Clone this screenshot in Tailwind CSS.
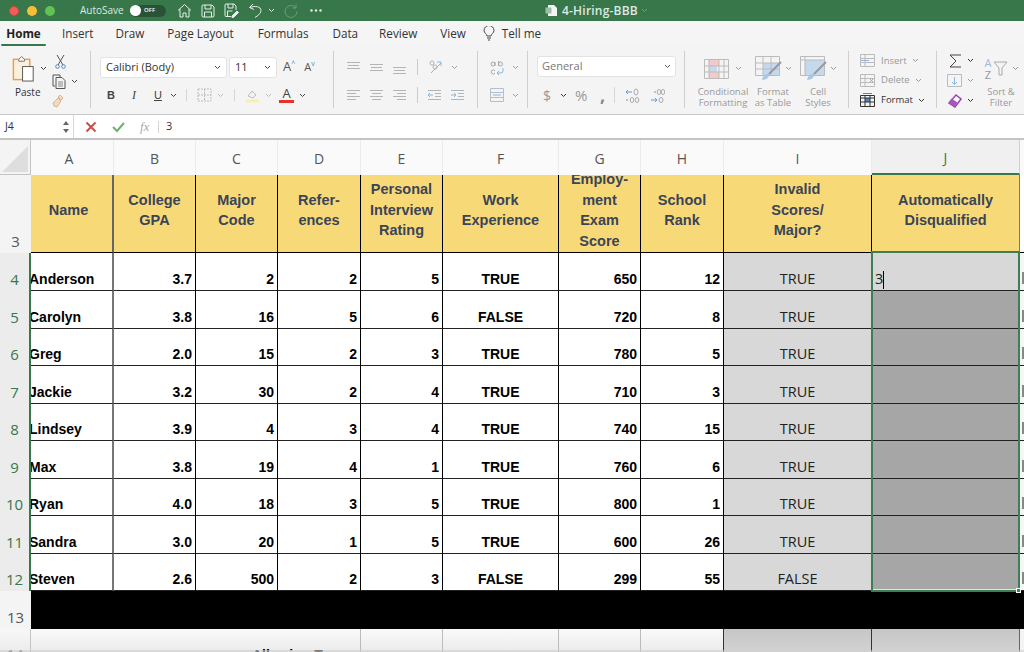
<!DOCTYPE html><html lang="en">
<head>
  <meta charset="UTF-8">
  <title>4-Hiring-BBB</title>
  <script src="https://cdn.jsdelivr.net/npm/@tailwindcss/browser@4"></script>
</head>
<body class="w-[1024px] h-[652px] overflow-hidden bg-white font-['Open_Sans',sans-serif] text-[#333] relative">

  <!-- title bar -->
  <div class="h-[21px] bg-[#38774a] flex items-center relative">
    <div class="flex gap-[8px] ml-[9px] w-[71px]">
      <span class="w-[10px] h-[10px] rounded-full bg-[#ee5f57] border border-[#d0483f]"></span>
      <span class="w-[10px] h-[10px] rounded-full bg-[#f6bd3b]"></span>
      <span class="w-[10px] h-[10px] rounded-full bg-[#5fc454]"></span>
    </div>
    <span class="text-[10px] text-[#dfe9e2] w-[50px]">AutoSave</span>
    <div class="w-[36px] h-[12px] rounded-full bg-[#2a5237] flex items-center">
      <span class="w-[11px] h-[11px] rounded-full bg-white"></span>
      <span class="text-[6px] text-white ml-[3px] font-semibold">OFF</span>
    </div>
    <div class="flex items-center ml-[11px] gap-[9px]">
      <svg width="15" height="15" viewBox="0 0 15 15" fill="none" stroke="#e6efe9"><path d="M1 7.500 7.500 1.500 14 7.500M3 6v8h3v-4h3v4h3V6"/></svg>
      <svg width="14" height="14" viewBox="0 0 14 14" fill="none" stroke="#e6efe9"><path d="M1 2a1 1 0 0 1 1-1h9l2 2v9a1 1 0 0 1-1 1H2a1 1 0 0 1-1-1zM4 1v4h6V1M3.500 13V8h7v5"/></svg>
      <svg width="15" height="15" viewBox="0 0 15 15" fill="none" stroke="#e6efe9"><path d="M7 13.500H2a1 1 0 0 1-1-1V2a1 1 0 0 1 1-1h8l2 2v4M4 1v4h5V1M3.500 13V8h5"/><path d="m8 13 5-5 1.500 1.500-5 5H8z" fill="#e6efe9"/></svg>
      <svg width="15" height="15" viewBox="0 0 15 15" fill="none" stroke="#e6efe9"><path d="M5 1 1.500 4.500 6 6.500M2 4.500c5-2 11-1 11 3 0 3-3 5-6 7"/></svg>
      <svg class="ml-[-4px]" width="7" height="5" viewBox="0 0 7 5" fill="none" stroke="#e6efe9"><path d="m1 1 2.500 2.500L6 1"/></svg>
      <svg width="14" height="14" viewBox="0 0 14 14" fill="none" stroke="#6d9d7c"><path d="M11.500 3.500a6 6 0 1 0 1.500 4M12 .5v3.500H8.500"/></svg>
      <svg class="ml-[3px]" width="12" height="3" viewBox="0 0 12 3" fill="#e6efe9"><circle cx="1.500" cy="1.500" r="1.200"/><circle cx="6" cy="1.500" r="1.200"/><circle cx="10.500" cy="1.500" r="1.200"/></svg>
    </div>
    <div class="absolute left-[545px] top-0 h-[21px] flex items-center">
      <svg width="13" height="13" viewBox="0 0 13 13"><path d="M3 1h6l3 3v8H3z" fill="#f4f6f4"/><rect x="0.500" y="3.500" width="6" height="6" fill="#9dbfa8"/></svg>
      <span class="ml-[4px] text-[12px] tracking-[0.2px] font-semibold text-[#dfe9e2]">4-Hiring-BBB</span>
      <svg class="ml-[3px]" width="7" height="5" viewBox="0 0 7 5" fill="none" stroke="#6d9d7c"><path d="m1 1 2.500 2.500L6 1"/></svg>
    </div>
  </div>

  <!-- tabs -->
  <div class="h-[25px] bg-[#f5f5f5] flex items-center text-[11.700px] text-[#333] relative">
    <div class="ml-[1px] w-[45px] h-[25px] flex justify-center items-center relative font-bold text-[#222]">Home
      <span class="absolute left-0 right-0 bottom-0 h-[2px] bg-[#38774a] rounded-sm"></span>
    </div>
    <span class="ml-[16px]">Insert</span>
    <span class="ml-[22px]">Draw</span>
    <span class="ml-[23px]">Page Layout</span>
    <span class="ml-[24px]">Formulas</span>
    <span class="ml-[24px]">Data</span>
    <span class="ml-[21px]">Review</span>
    <span class="ml-[23px]">View</span>
    <svg class="ml-[17px]" width="12" height="15" viewBox="0 0 12 15" fill="none" stroke="#444"><path d="M4 10c0-2-3-3-3-5.500a5 5 0 0 1 10 0C11 7 8 8 8 10zM4 12h4M5 14h2"/></svg>
    <span class="ml-[7px]">Tell me</span>
  </div>

  <!-- ribbon -->
  <div class="h-[69px] bg-[#f4f4f4] border-b border-[#c9c9c9] flex items-start text-[#555] relative">
    <!-- clipboard -->
    <div class="w-[91px] h-[57px] mt-[5px] border-r border-[#cfcfcf] flex">
      <div class="w-[52px] flex flex-col">
        <div class="flex items-center ml-[11px] mt-[4px]">
          <svg width="27" height="27" viewBox="0 0 28 28" fill="none"><rect x="2.500" y="4.500" width="17" height="21" fill="#fbf0de" stroke="#ee9c45" stroke-width="1.500"/><path d="M8 4.500 11 1.500l3 3v2H8z" fill="#f5f5f5" stroke="#777"/><rect x="12" y="12" width="11" height="15" fill="#fff" stroke="#555"/></svg>
          <svg class="ml-[2px]" width="7" height="5" viewBox="0 0 7 5" fill="none" stroke="#444"><path d="m1 1 2.500 2.500L6 1"/></svg>
        </div>
        <span class="text-[10px] leading-[10px] text-[#333] mt-[5px] ml-[15px]">Paste</span>
      </div>
      <div class="flex flex-col items-start mt-[3px]">
        <svg class="ml-[3px]" width="11" height="15" viewBox="0 0 11 15" fill="none" stroke="#555"><path d="M2 1 8 11M9 1 3 11"/><circle cx="2.500" cy="12.500" r="1.800" stroke="#4a8ac9"/><circle cx="8.500" cy="12.500" r="1.800" stroke="#4a8ac9"/></svg>
        <svg class="mt-[5px]" width="26" height="15" viewBox="0 0 26 15" fill="none" stroke="#555"><path d="M3 12H1V1h7v2"/><path d="M4 3.500h6l3 3v8H4z"/><path d="M6 8h5M6 10h5M6 12h5" stroke="#888"/><path d="m20 6 2.500 2.500L25 6" stroke="#444"/></svg>
        <svg class="mt-[5px]" width="15" height="14" viewBox="0 0 15 14" fill="#f3d9bd" stroke="#d8b595"><path d="m8 1 3 3-2 2-3-3zM1 9l5-5 3 3-4 6-3-1z"/></svg>
      </div>
    </div>
    <!-- font -->
    <div class="w-[243px] h-[57px] mt-[5px] border-r border-[#cfcfcf] pl-[9px]">
      <div class="flex items-center h-[22px] mt-[5px]">
        <div class="w-[127px] h-[21px] bg-white rounded-[3px] border border-[#e3e3e3] flex items-center justify-between px-[5px] text-[11px] text-[#333]">Calibri (Body)<svg width="7" height="5" viewBox="0 0 7 5" fill="none" stroke="#444"><path d="m1 1 2.500 2.500L6 1"/></svg></div>
        <div class="w-[48px] h-[21px] ml-[2px] bg-white rounded-[3px] border border-[#e3e3e3] flex items-center justify-between px-[5px] text-[11px] text-[#333]">11<svg width="7" height="5" viewBox="0 0 7 5" fill="none" stroke="#444"><path d="m1 1 2.500 2.500L6 1"/></svg></div>
        <span class="ml-[6px] text-[13px] text-[#555]">A</span><span class="text-[7px] text-[#4a8ac9] mb-[6px]">^</span>
        <span class="ml-[9px] text-[11px] text-[#555]">A</span><span class="text-[7px] text-[#4a8ac9] mb-[6px]">v</span>
      </div>
      <div class="flex items-center h-[22px] mt-[6px] text-[#444]">
        <span class="ml-[6px] w-[26px] text-[11px] font-bold font-['Liberation_Sans',sans-serif] text-center pr-[16px]">B</span>
        <span class="w-[22px] text-[12px] italic font-['Liberation_Serif',serif]">I</span>
        <span class="w-[16px] text-[11px] underline font-['Liberation_Sans',sans-serif]">U</span>
        <svg width="7" height="5" viewBox="0 0 7 5" fill="none" stroke="#444"><path d="m1 1 2.500 2.500L6 1"/></svg>
        <span class="ml-[9px] w-px h-[12px] bg-[#d5d5d5]"></span>
        <svg class="ml-[10px]" width="15" height="14" viewBox="0 0 15 14" fill="none" stroke="#bbb" stroke-dasharray="2 1"><path d="M1 1h13v12H1zM7.500 1v12M1 7h13"/></svg>
        <svg class="ml-[5px]" width="7" height="5" viewBox="0 0 7 5" fill="none" stroke="#bbb"><path d="m1 1 2.500 2.500L6 1"/></svg>
        <span class="ml-[10px] w-px h-[12px] bg-[#d5d5d5]"></span>
        <svg class="ml-[10px]" width="15" height="15" viewBox="0 0 15 15"><path d="m3 8 4-5 4 4-3 3z" fill="none" stroke="#bbb"/><rect x="1" y="11.500" width="13" height="3" fill="#f7efb0"/></svg>
        <svg class="ml-[5px]" width="7" height="5" viewBox="0 0 7 5" fill="none" stroke="#bbb"><path d="m1 1 2.500 2.500L6 1"/></svg>
        <div class="ml-[7px] flex flex-col items-center w-[15px]"><span class="text-[13px] leading-[12px]">A</span><span class="w-[15px] h-[3px] bg-[#e8332a] mt-[1px]"></span></div>
        <svg class="ml-[5px]" width="7" height="5" viewBox="0 0 7 5" fill="none" stroke="#444"><path d="m1 1 2.500 2.500L6 1"/></svg>
      </div>
    </div>
    <!-- alignment -->
    <div class="w-[144px] h-[57px] mt-[5px] border-r border-[#cfcfcf] pl-[13px]">
      <div class="flex items-center h-[22px] mt-[5px] gap-[10px] opacity-70">
        <svg width="13" height="13" viewBox="0 0 13 13" stroke="#999"><path d="M0 1.500h13M1 4.500h11M0 7.500h13"/></svg>
        <svg width="13" height="13" viewBox="0 0 13 13" stroke="#999"><path d="M0 3.500h13M1 6.500h11M0 9.500h13"/></svg>
        <svg width="13" height="13" viewBox="0 0 13 13" stroke="#999"><path d="M0 6.500h13M1 9.500h11M0 12.500h13"/></svg>
        <span class="w-px h-[16px] bg-[#bbb] ml-[1px]"></span>
        <svg width="15" height="14" viewBox="0 0 15 14" fill="none" stroke="#999"><circle cx="4" cy="3" r="2"/><circle cx="7" cy="7" r="2"/><path d="M3 13 13 3M9 2h4v4" stroke="#5aa0dc"/></svg>
        <svg class="ml-[-2px]" width="7" height="5" viewBox="0 0 7 5" fill="none" stroke="#777"><path d="m1 1 2.500 2.500L6 1"/></svg>
      </div>
      <div class="flex items-center h-[22px] mt-[6px] gap-[10px] opacity-70">
        <svg width="13" height="13" viewBox="0 0 13 13" stroke="#999"><path d="M0 1.500h13M0 4.500h9M0 7.500h13M0 10.500h9"/></svg>
        <svg width="13" height="13" viewBox="0 0 13 13" stroke="#999"><path d="M0 1.500h13M2 4.500h9M0 7.500h13M2 10.500h9"/></svg>
        <svg width="13" height="13" viewBox="0 0 13 13" stroke="#999"><path d="M0 1.500h13M4 4.500h9M0 7.500h13M4 10.500h9"/></svg>
        <span class="w-px h-[16px] bg-[#bbb] ml-[1px]"></span>
        <svg width="13" height="13" viewBox="0 0 13 13" fill="none" stroke="#999"><path d="M0 1.500h13M7 4.500h6M7 7.500h6M0 10.500h13"/><path d="M5 6H0M2 4 0 6l2 2" stroke="#5aa0dc"/></svg>
        <svg width="13" height="13" viewBox="0 0 13 13" fill="none" stroke="#999"><path d="M0 1.500h13M7 4.500h6M7 7.500h6M0 10.500h13"/><path d="M0 6h5M3 4l2 2-2 2" stroke="#5aa0dc"/></svg>
      </div>
    </div>
    <!-- wrap / merge -->
    <div class="w-[50px] h-[57px] mt-[5px] border-r border-[#cfcfcf] pl-[12px]">
      <div class="flex items-center h-[22px] mt-[5px] gap-[8px] opacity-70">
        <svg width="14" height="15" viewBox="0 0 14 15" fill="none" stroke="#888"><circle cx="3" cy="4" r="2"/><path d="M5 2v4M8.500 1v5"/><circle cx="10.500" cy="4" r="2"/><path d="M5 11a2 2 0 1 0 0 2"/><path d="M13 8v3a2 2 0 0 1-2 2H7M9 11l-2 2 2 2" stroke="#5aa0dc"/></svg>
        <svg width="7" height="5" viewBox="0 0 7 5" fill="none" stroke="#777"><path d="m1 1 2.500 2.500L6 1"/></svg>
      </div>
      <div class="flex items-center h-[22px] mt-[6px] gap-[8px] opacity-70">
        <svg width="14" height="14" viewBox="0 0 14 14" fill="none" stroke="#9ab"><path d="M.5.500h13v13H.500zM.5 4.500h13M.5 9.500h13"/><path d="M3 7h8" stroke="#5aa0dc"/></svg>
        <svg width="7" height="5" viewBox="0 0 7 5" fill="none" stroke="#777"><path d="m1 1 2.500 2.500L6 1"/></svg>
      </div>
    </div>
    <!-- number -->
    <div class="w-[157px] h-[57px] mt-[5px] border-r border-[#cfcfcf] pl-[9px]">
      <div class="w-[139px] h-[21px] mt-[5px] bg-white rounded-[3px] border border-[#e3e3e3] flex items-center justify-between px-[4px] text-[11px] text-[#777]">General<svg width="7" height="5" viewBox="0 0 7 5" fill="none" stroke="#555"><path d="m1 1 2.500 2.500L6 1"/></svg></div>
      <div class="flex items-center h-[22px] mt-[7px] text-[#999]">
        <span class="ml-[6px] w-[10px] text-[14px]">$</span>
        <svg class="ml-[7px]" width="7" height="5" viewBox="0 0 7 5" fill="none" stroke="#333"><path d="m1 1 2.500 2.500L6 1"/></svg>
        <span class="ml-[8px] w-[16px] text-[15px]">%</span>
        <span class="ml-[9px] w-[14px] text-[18px] leading-[12px] font-bold text-[#888]">,</span>
        <span class="w-px h-[16px] bg-[#d5d5d5]"></span>
        <svg class="ml-[10px]" width="15" height="15" viewBox="0 0 15 15" fill="none" stroke="#aaa"><path d="M7 4H1M3 2 1 4l2 2" stroke="#5aa0dc"/><ellipse cx="11" cy="4" rx="2" ry="3"/><circle cx="2" cy="12" r=".6"/><ellipse cx="7" cy="12" rx="1.800" ry="2.500"/><ellipse cx="12" cy="12" rx="1.800" ry="2.500"/></svg>
        <svg class="ml-[10px]" width="15" height="15" viewBox="0 0 15 15" fill="none" stroke="#aaa"><circle cx="5" cy="4" r=".6"/><ellipse cx="9" cy="4" rx="1.800" ry="2.500"/><ellipse cx="13" cy="4" rx="1.800" ry="2.500"/><path d="M1 12h6M5 10l2 2-2 2" stroke="#5aa0dc"/><ellipse cx="11" cy="12" rx="2" ry="2.500"/></svg>
      </div>
    </div>
    <!-- styles -->
    <div class="w-[164px] h-[57px] mt-[5px] border-r border-[#cfcfcf] flex text-[9.500px] leading-[11px] text-[#999] text-center whitespace-nowrap">
      <div class="w-[66px] ml-[5px] flex flex-col items-center">
        <div class="flex items-center h-[28px] mt-[4px]">
          <svg width="25" height="20" viewBox="0 0 25 20" fill="none"><rect x="5" y="1" width="10" height="6" fill="#f3c9c9"/><rect x="5" y="7" width="8" height="6" fill="#c5d9ee"/><rect x="5" y="13" width="10" height="6" fill="#f3c9c9"/><path d="M.5.500h24v19H.500zM.5 7h24M.5 13h24M5 .5v19M15 .5v19M20 .5v19" stroke="#bbb"/></svg>
          <svg class="ml-[6px]" width="7" height="5" viewBox="0 0 7 5" fill="none" stroke="#999"><path d="m1 1 2.500 2.500L6 1"/></svg>
        </div>
        <span class="mt-[4px]">Conditional<br>Formatting</span>
      </div>
      <div class="w-[34px] flex flex-col items-center">
        <div class="flex items-center h-[28px] mt-[4px]">
          <svg width="27" height="25" viewBox="0 0 27 25" fill="none"><rect x="8" y="7" width="17" height="13" fill="#c5d9ee"/><path d="M.5.500h24v19H.500zM.5 7h24M.5 13h24M8 .5v19M16 .5v19" stroke="#bbb"/><path d="M26 6 14 18" stroke="#999" stroke-width="2"/><path d="M7 24c1-5 4-7 7-6 1 3-3 6-7 6z" fill="#a9c6e6"/></svg>
          <svg class="ml-[3px]" width="7" height="5" viewBox="0 0 7 5" fill="none" stroke="#999"><path d="m1 1 2.500 2.500L6 1"/></svg>
        </div>
        <span class="mt-[4px]">Format<br>as Table</span>
      </div>
      <div class="w-[56px] flex flex-col items-center">
        <div class="flex items-center h-[28px] mt-[4px]">
          <svg width="27" height="25" viewBox="0 0 27 25" fill="none"><rect x="5" y="4" width="19" height="15" fill="#c5d9ee"/><path d="M.5.500h24v19H.500zM.5 4h24M5 .5v19" stroke="#bbb"/><path d="M26 6 14 18" stroke="#999" stroke-width="2"/><path d="M7 24c1-5 4-7 7-6 1 3-3 6-7 6z" fill="#a9c6e6"/></svg>
          <svg class="ml-[3px]" width="7" height="5" viewBox="0 0 7 5" fill="none" stroke="#999"><path d="m1 1 2.500 2.500L6 1"/></svg>
        </div>
        <span class="mt-[4px]">Cell<br>Styles</span>
      </div>
    </div>
    <!-- cells -->
    <div class="w-[88px] h-[57px] mt-[5px] border-r border-[#cfcfcf] pl-[11px] pt-[2px] text-[9.500px] flex flex-col gap-[4px] text-[#999]">
      <div class="flex items-center h-[16px]">
        <svg width="15" height="13" viewBox="0 0 15 13" fill="none" stroke="#bbb"><path d="M.5.500h14v12H.500zM.5 4.500h14M.5 8.500h14M5 .5v12"/><path d="M9 6.500H1" stroke="#8ab8e0"/></svg>
        <span class="ml-[6px]">Insert</span><svg class="ml-[5px]" width="7" height="5" viewBox="0 0 7 5" fill="none" stroke="#999"><path d="m1 1 2.500 2.500L6 1"/></svg>
      </div>
      <div class="flex items-center h-[16px]">
        <svg width="15" height="13" viewBox="0 0 15 13" fill="none" stroke="#bbb"><path d="M.5.500h14v12H.500zM.5 4.500h14M.5 8.500h14M5 .5v12"/><path d="m10 5 3 3M13 5l-3 3" stroke="#e58a8a"/></svg>
        <span class="ml-[6px]">Delete</span><svg class="ml-[5px]" width="7" height="5" viewBox="0 0 7 5" fill="none" stroke="#999"><path d="m1 1 2.500 2.500L6 1"/></svg>
      </div>
      <div class="flex items-center h-[16px] text-[#333]">
        <svg width="15" height="14" viewBox="0 0 15 14" fill="none" stroke="#333"><rect x="5" y="5" width="5" height="4" fill="#4a8ac9" stroke="none"/><path d="M.5 2.500h14v11H.500zM.5 5h14M.5 9h14M5 2.500v11M10 2.500v11"/><path d="M3 .5h9" stroke="#4a8ac9"/></svg>
        <span class="ml-[6px]">Format</span><svg class="ml-[5px]" width="7" height="5" viewBox="0 0 7 5" fill="none" stroke="#333"><path d="m1 1 2.500 2.500L6 1"/></svg>
      </div>
    </div>
    <!-- editing -->
    <div class="flex-1 h-[57px] mt-[5px] flex">
      <div class="ml-[10px] w-[34px] pt-[2px] flex flex-col gap-[5px]">
        <div class="flex items-center h-[15px] gap-[5px] pl-[2px]">
          <svg width="13" height="14" viewBox="0 0 13 14" fill="none" stroke="#444"><path d="M12 1H1l6 6-6 6h11"/></svg>
          <svg width="7" height="5" viewBox="0 0 7 5" fill="none" stroke="#333"><path d="m1 1 2.500 2.500L6 1"/></svg>
        </div>
        <div class="flex items-center h-[15px] gap-[5px]">
          <svg width="15" height="13" viewBox="0 0 15 13" fill="none" stroke="#bbb"><path d="M.5.500h14v12H.500z"/><path d="M7.500 3v7M5 8l2.500 2.500L10 8" stroke="#8ab8e0"/></svg>
          <svg width="7" height="5" viewBox="0 0 7 5" fill="none" stroke="#999"><path d="m1 1 2.500 2.500L6 1"/></svg>
        </div>
        <div class="flex items-center h-[15px] gap-[5px]">
          <svg width="15" height="14" viewBox="0 0 15 14"><path d="m9 1 5 4-6 8-6-4z" fill="#fff" stroke="#9a45ad" stroke-width="1.500"/><path d="m1.500 8.500 6 4 3-4-6-4z" fill="#a855bd"/></svg>
          <svg width="7" height="5" viewBox="0 0 7 5" fill="none" stroke="#333"><path d="m1 1 2.500 2.500L6 1"/></svg>
        </div>
      </div>
      <div class="w-[40px] flex flex-col items-center text-[9.500px] leading-[11px] text-[#999] text-center whitespace-nowrap">
        <div class="flex items-center h-[28px] mt-[4px]">
          <div class="flex flex-col text-[11px] leading-[12px] w-[10px]"><span class="text-[#9bbbdc]">A</span><span class="text-[#999]">Z</span></div>
          <svg width="15" height="15" viewBox="0 0 15 15" fill="none" stroke="#aaa"><path d="M1 1h13L9 7v7H6V7z"/></svg>
          <svg class="ml-[4px]" width="7" height="5" viewBox="0 0 7 5" fill="none" stroke="#999"><path d="m1 1 2.500 2.500L6 1"/></svg>
        </div>
        <span class="mt-[4px]">Sort &amp;<br>Filter</span>
      </div>
    </div>
  </div>

  <!-- formula bar -->
  <div class="h-[25px] bg-white flex items-center border-b-2 border-[#c4c4c4]">
    <div class="w-[74px] h-[23px] flex items-center justify-between pl-[5px] pr-[4px] text-[10.500px] text-[#333] bg-white border-r border-[#d8d8d8]">J4
      <svg width="6" height="14" viewBox="0 0 6 14" fill="#666"><path d="m3 1 3 4H0zM3 13 0 9h6z"/></svg>
    </div>
    <svg class="ml-[11px]" width="12" height="12" viewBox="0 0 12 12" stroke="#c9504a" stroke-width="2"><path d="m1.500 1.500 9 9M10.500 1.500l-9 9"/></svg>
    <svg class="ml-[15px]" width="13" height="12" viewBox="0 0 13 12" fill="none" stroke="#6cb26a" stroke-width="2"><path d="m1 6 4 4 7-8"/></svg>
    <span class="ml-[15px] text-[13px] italic text-[#aaa] font-['Liberation_Serif',serif] w-[13px]">fx</span>
    <span class="ml-[5px] w-px h-[12px] bg-[#d5d5d5]"></span>
    <span class="ml-[7px] text-[11px] text-[#333]">3</span>
  </div>

  <!-- sheet -->
  <div id="sheet" class="grid grid-cols-[31px_83px_82px_82px_83px_82px_116px_82px_83px_148px_148px_4px] grid-rows-[35px_78px_38px_38px_37px_38px_37px_38px_37px_38px_37px_38px_30px] relative"></div>

  <!-- bottom edge of the window -->
  <div class="absolute left-0 right-0 bottom-0 h-[2px] bg-[#cfcfcf]/60"></div>

  <script>
    const cols = ['A','B','C','D','E','F','G','H','I','J'];
    const heads = ['Name','College<br>GPA','Major<br>Code','Refer-<br>ences','Personal<br>Interview<br>Rating','Work<br>Experience','Employ-<br>ment<br>Exam<br>Score','School<br>Rank','Invalid<br>Scores/<br>Major?','Automatically<br>Disqualified'];
    const rows = [
      [4,'Anderson','3.7',2,2,5,'TRUE',650,12,'TRUE'],
      [5,'Carolyn','3.8',16,5,6,'FALSE',720,8,'TRUE'],
      [6,'Greg','2.0',15,2,3,'TRUE',780,5,'TRUE'],
      [7,'Jackie','3.2',30,2,4,'TRUE',710,3,'TRUE'],
      [8,'Lindsey','3.9',4,3,4,'TRUE',740,15,'TRUE'],
      [9,'Max','3.8',19,4,1,'TRUE',760,6,'TRUE'],
      [10,'Ryan','4.0',18,3,5,'TRUE',800,1,'TRUE'],
      [11,'Sandra','3.0',20,1,5,'TRUE',600,26,'TRUE'],
      [12,'Steven','2.6',500,2,3,'FALSE',299,55,'FALSE'],
    ];
    const rowHead = 'flex items-end justify-center pb-[2px] text-[15px] leading-[20px] bg-[#ececec]';
    let html = '';

    // column letters
    html += `<div class="bg-[#f4f4f4] border-r border-b border-[#c4c4c4] overflow-hidden pt-[3px]"><svg width="30" height="31"><path d="M28 3v26H2z" fill="#dedede"/></svg></div>`;
    cols.forEach((c, i) => {
      const sel = c === 'J';
      html += `<div class="flex items-center justify-center pt-[2px] text-[14px] border-r ${i === 0 ? 'pr-[6px]' : ''} ${sel ? 'bg-[#f0f0f0] text-[#38774a] border-[#d0d0d0] border-b-2 border-b-[#38774a]' : 'bg-[#fafafa] text-[#555] border-[#ebebeb]'}">${c}</div>`;
    });
    html += `<div class="bg-[#fafafa]"></div>`;

    // header row
    html += `<div class="${rowHead} text-[#555] bg-[#f4f4f4]">3</div>`;
    heads.forEach((h, i) => {
      const sel = i === 9;
      html += `<div class="bg-[#f8d978] flex items-center justify-center text-center font-['Liberation_Sans',sans-serif] font-bold text-[14.500px] leading-[20.500px] text-[#3a4557] overflow-hidden border-b ${sel ? 'border-r border-[#8a7a4a]' : 'border-r border-black'} ${i === 0 ? 'border-r-2 border-r-[#666] pr-[6px]' : ''}"><span class="mt-[-7px]">${h}</span></div>`;
    });
    html += `<div class="bg-white border-b border-black"></div>`;

    // data rows
    rows.forEach((r, n) => {
      html += `<div class="${rowHead} relative z-10 text-[#38774a] border-r-2 border-[#38774a]">${r[0]}</div>`;
      r.slice(1).forEach((v, i) => {
        const base = 'flex items-end pb-[1px] text-[14px] leading-[20px] bg-white border-b border-[#222]';
        if (i === 0) html += `<div class="${base} ml-[-2px] whitespace-nowrap font-['Liberation_Sans',sans-serif] font-bold text-black border-r-2 border-r-[#777]">${v}</div>`;
        else if (i === 5) html += `<div class="${base} justify-center font-['Liberation_Sans',sans-serif] font-bold text-black border-r border-r-black">${v}</div>`;
        else if (i === 8) html += `<div class="flex items-end justify-center pb-[1px] text-[14.500px] leading-[20px] bg-[#d8d8d8] border-b border-[#222] border-r border-r-[#222] text-[#222]">${v}</div>`;
        else html += `<div class="${base} justify-end pr-[3px] font-['Liberation_Sans',sans-serif] font-bold text-black border-r border-r-black">${v}</div>`;
      });
      const first = n === 0;
      html += `<div class="flex items-end border-b border-[#222] pl-[3px] pb-[1px] text-[14.500px] leading-[20px] text-[#222] ${first ? 'bg-[#d8d8d8]' : 'bg-[#a6a6a6]'}">${first ? '3<span class="w-px h-[18px] bg-black"></span>' : ''}</div>`;
      html += `<div class="bg-[#f4f8f5] border-b border-[#222] flex items-end justify-end pb-[6px]"><span class="w-[2px] h-[12px] bg-[#888]"></span></div>`;
    });

    // row 13 is blacked out across the sheet
    html += `<div class="${rowHead} text-[#555] bg-[#f4f4f4]">13</div>`;
    html += `<div class="col-span-11 bg-black"></div>`;

    // row 14, cut off by the window edge
    html += `<div class="bg-linear-to-b from-[#f7f7f7] to-[#e8e8e8] border-r border-[#c4c4c4] text-center text-[15px] leading-[20px] text-[#555] pt-[15px] overflow-hidden">14</div>`;
    html += `<div class="col-span-4 bg-linear-to-b from-[#fafafa] to-[#e6e6e6] border-r border-[#bbb] pl-[221px] pt-[16px] text-[14px] leading-[20px] font-['Liberation_Sans',sans-serif] font-bold text-black whitespace-nowrap overflow-hidden">Allowing T</div>`;
    html += `<div class="bg-linear-to-b from-[#fafafa] to-[#e6e6e6] border-r border-[#bbb]"></div>`;
    html += `<div class="bg-linear-to-b from-[#fafafa] to-[#e6e6e6] border-r border-[#bbb]"></div>`;
    html += `<div class="bg-linear-to-b from-[#fafafa] to-[#e6e6e6] border-r border-[#bbb]"></div>`;
    html += `<div class="bg-linear-to-b from-[#fafafa] to-[#e6e6e6] border-r border-[#333]"></div>`;
    html += `<div class="bg-linear-to-b from-[#c6c6c6] to-[#d6d6d6] border-r border-[#333]"></div>`;
    html += `<div class="bg-linear-to-b from-[#c6c6c6] to-[#d6d6d6] border-r border-[#666]"></div>`;
    html += `<div class="bg-[#f4f4f4]"></div>`;

    // selection box over J4:J12
    html += `<div class="absolute left-[871px] top-[111px] w-[149px] h-[341px] border-2 border-[#3f7d54] pointer-events-none z-20"><span class="absolute left-0 right-0 bottom-0 h-px bg-[#dfe8e2]"></span><span class="absolute right-[-3px] bottom-[-3px] w-[5px] h-[5px] bg-[#3f7d54] border border-white"></span></div>`;
    document.getElementById('sheet').innerHTML = html;
  </script>
</body>
</html>
